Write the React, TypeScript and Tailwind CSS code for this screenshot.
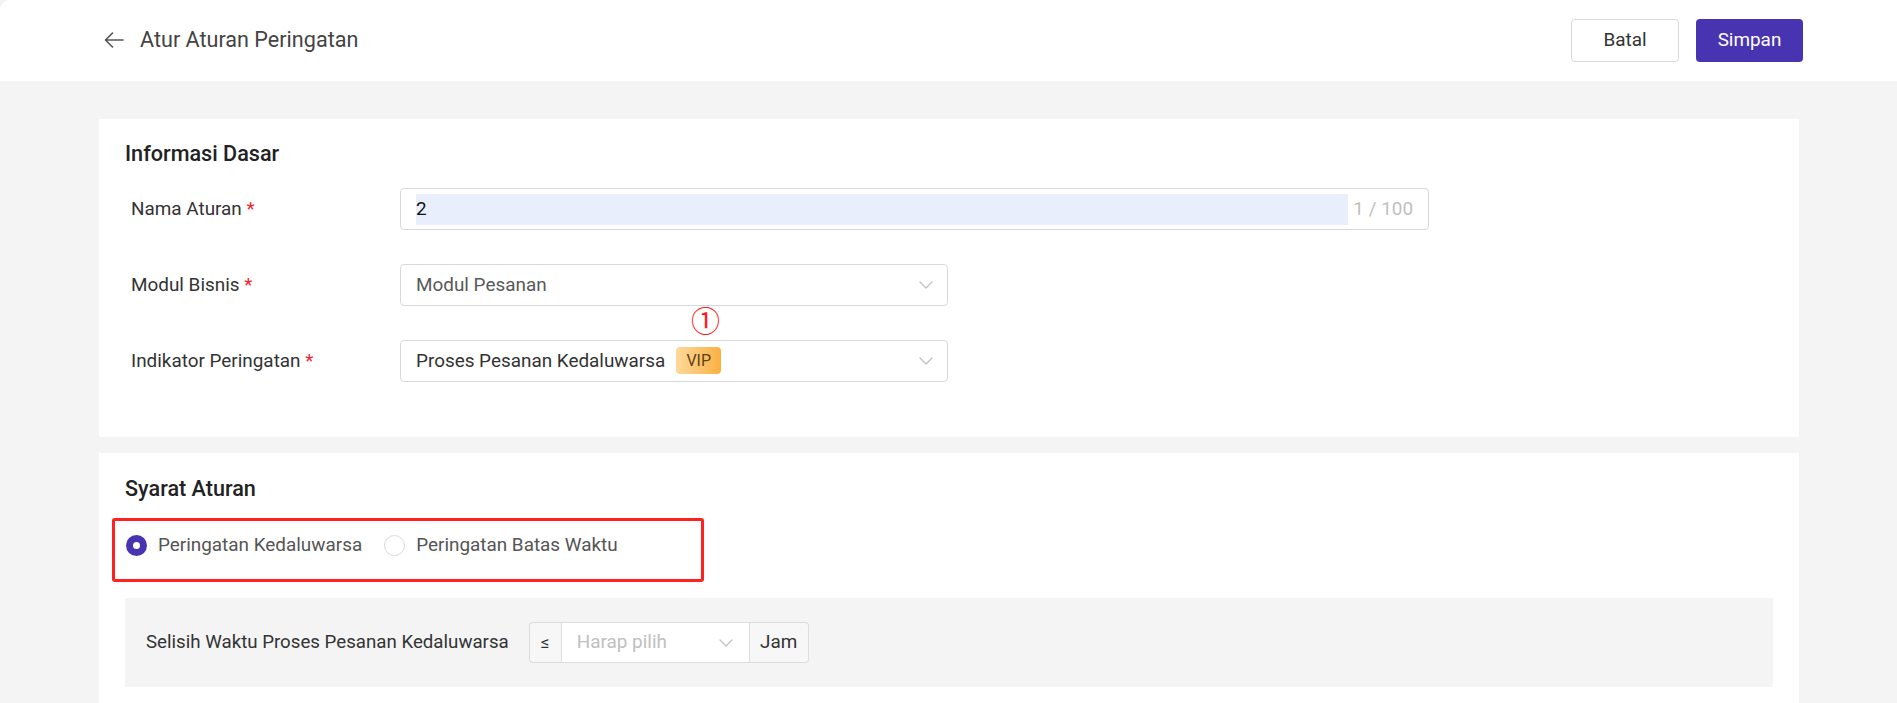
import React from "react";

const Chevron = ({ className = "" }: { className?: string }) => (
  <svg className={className} width="14" height="8" viewBox="0 0 14 8" fill="none">
    <path d="M1 1l6 6 6-6" stroke="#bfbfbf" strokeWidth="1.2" strokeLinecap="round" strokeLinejoin="round" />
  </svg>
);

const Label = ({ text }: { text: string }) => (
  <div className="w-[275px] shrink-0 pl-[6px] text-[18.9px] text-[#333]">
    {text} <span className="text-[#f5222d]">*</span>
  </div>
);

export default function App() {
  return (
    <div className="min-h-screen bg-[#f4f4f4] font-['Roboto',_'Noto_Sans',sans-serif]">
      {/* Header */}
      <div className="flex h-[81px] items-center justify-between rounded-tl-[10px] bg-white pl-[104px] pr-[94px]">
        <div className="flex items-center gap-[16px]">
          <svg width="20" height="16" viewBox="0 0 20 16" fill="none">
            <path d="M19 8H1.5M8.5 1L1.5 8l7 7" stroke="#555" strokeWidth="1.6" strokeLinecap="round" strokeLinejoin="round" />
          </svg>
          <span className="text-[21.6px] text-[#444]">Atur Aturan Peringatan</span>
        </div>
        <div className="flex items-center gap-[17px]">
          <button className="h-[43px] w-[108px] rounded-[4px] border border-[#d9d9d9] bg-white text-[18.9px] text-[#333]">
            Batal
          </button>
          <button className="h-[43px] w-[107px] rounded-[4px] bg-[#4834b1] text-[18.9px] text-white">Simpan</button>
        </div>
      </div>

      <div className="flex flex-col gap-[16px] pl-[99px] pr-[98px] pt-[38px]">
        {/* Card 1 */}
        <div className="bg-white px-[26px] pb-[55px] pt-[21px]">
          <div className="text-[21.6px] font-medium leading-[28px] text-[#222]">Informasi Dasar</div>
          <div className="mt-[20px] flex flex-col gap-[34px]">
            <div className="flex items-center">
              <Label text="Nama Aturan" />
              <div className="flex h-[42px] w-[1029px] items-center rounded-[4px] border border-[#d9d9d9] pl-[15px] pr-[15px]">
                <div className="flex h-[31px] flex-1 items-center bg-[#e8eefb] text-[18.9px] text-[#111]">2</div>
                <span className="ml-[5px] text-[18.9px] text-[#bfbfbf]">1 / 100</span>
              </div>
            </div>
            <div className="flex items-center">
              <Label text="Modul Bisnis" />
              <div className="flex h-[42px] w-[548px] items-center justify-between rounded-[4px] border border-[#d9d9d9] pl-[15px] pr-[14px]">
                <span className="text-[18.9px] text-[#595959]">Modul Pesanan</span>
                <Chevron />
              </div>
            </div>
            <div className="flex items-center">
              <Label text="Indikator Peringatan" />
              <div className="relative flex h-[42px] w-[548px] items-center justify-between rounded-[4px] border border-[#d9d9d9] pl-[15px] pr-[14px]">
                <div className="flex items-center gap-[11px]">
                  <span className="text-[18.9px] text-[#333]">Proses Pesanan Kedaluwarsa</span>
                  <span className="flex h-[27px] w-[45px] items-center justify-center rounded-[4px] bg-gradient-to-r from-[#fdd99a] to-[#fbb03b] text-[16px] text-[#5c4312]">
                    VIP
                  </span>
                </div>
                <Chevron />
                <span className="absolute left-[290px] top-[-36px] font-['Noto_Sans_CJK_SC',sans-serif] text-[29px] leading-none text-[#ff1a1a]">
                  ①
                </span>
              </div>
            </div>
          </div>
        </div>

        {/* Card 2 */}
        <div className="bg-white px-[26px] pb-[24px] pt-[22px]">
          <div className="text-[21.6px] font-medium leading-[28px] text-[#222]">Syarat Aturan</div>
          <div className="relative mt-[28px] flex h-[28px] items-center">
            <div className="pointer-events-none absolute left-[-13px] top-[-13px] h-[64px] w-[592px] rounded-[3px] border-[3px] border-[#ff2020]" />
            <div className="flex items-center gap-[11px] pl-[1px]">
              <span className="flex h-[21px] w-[21px] items-center justify-center rounded-full bg-[#4834b1]">
                <span className="h-[7px] w-[7px] rounded-full bg-white" />
              </span>
              <span className="text-[18.9px] text-[#555]">Peringatan Kedaluwarsa</span>
            </div>
            <div className="ml-[22px] flex items-center gap-[11px]">
              <span className="h-[21px] w-[21px] rounded-full border border-[#d9d9d9] bg-white" />
              <span className="text-[18.9px] text-[#555]">Peringatan Batas Waktu</span>
            </div>
          </div>
          <div className="mt-[39px] flex h-[89px] items-center bg-[#f4f4f4] pl-[21px]">
            <span className="text-[18.7px] text-[#333]">Selisih Waktu Proses Pesanan Kedaluwarsa</span>
            <div className="ml-[20px] flex h-[41px] items-stretch">
              <div className="flex w-[32px] items-center justify-center rounded-l-[4px] border border-r-0 border-[#dcdcdc] bg-[#f7f7f7] text-[17px] text-[#333]">
                ≤
              </div>
              <div className="flex w-[189px] items-center justify-between border border-[#dcdcdc] bg-white pl-[15px] pr-[16px]">
                <span className="text-[18.9px] text-[#c0c0c0]">Harap pilih</span>
                <Chevron />
              </div>
              <div className="flex w-[59px] items-center justify-center rounded-r-[4px] border border-l-0 border-[#dcdcdc] bg-[#f7f7f7] text-[18.9px] text-[#333]">
                Jam
              </div>
            </div>
          </div>
        </div>
      </div>
    </div>
  );
}
